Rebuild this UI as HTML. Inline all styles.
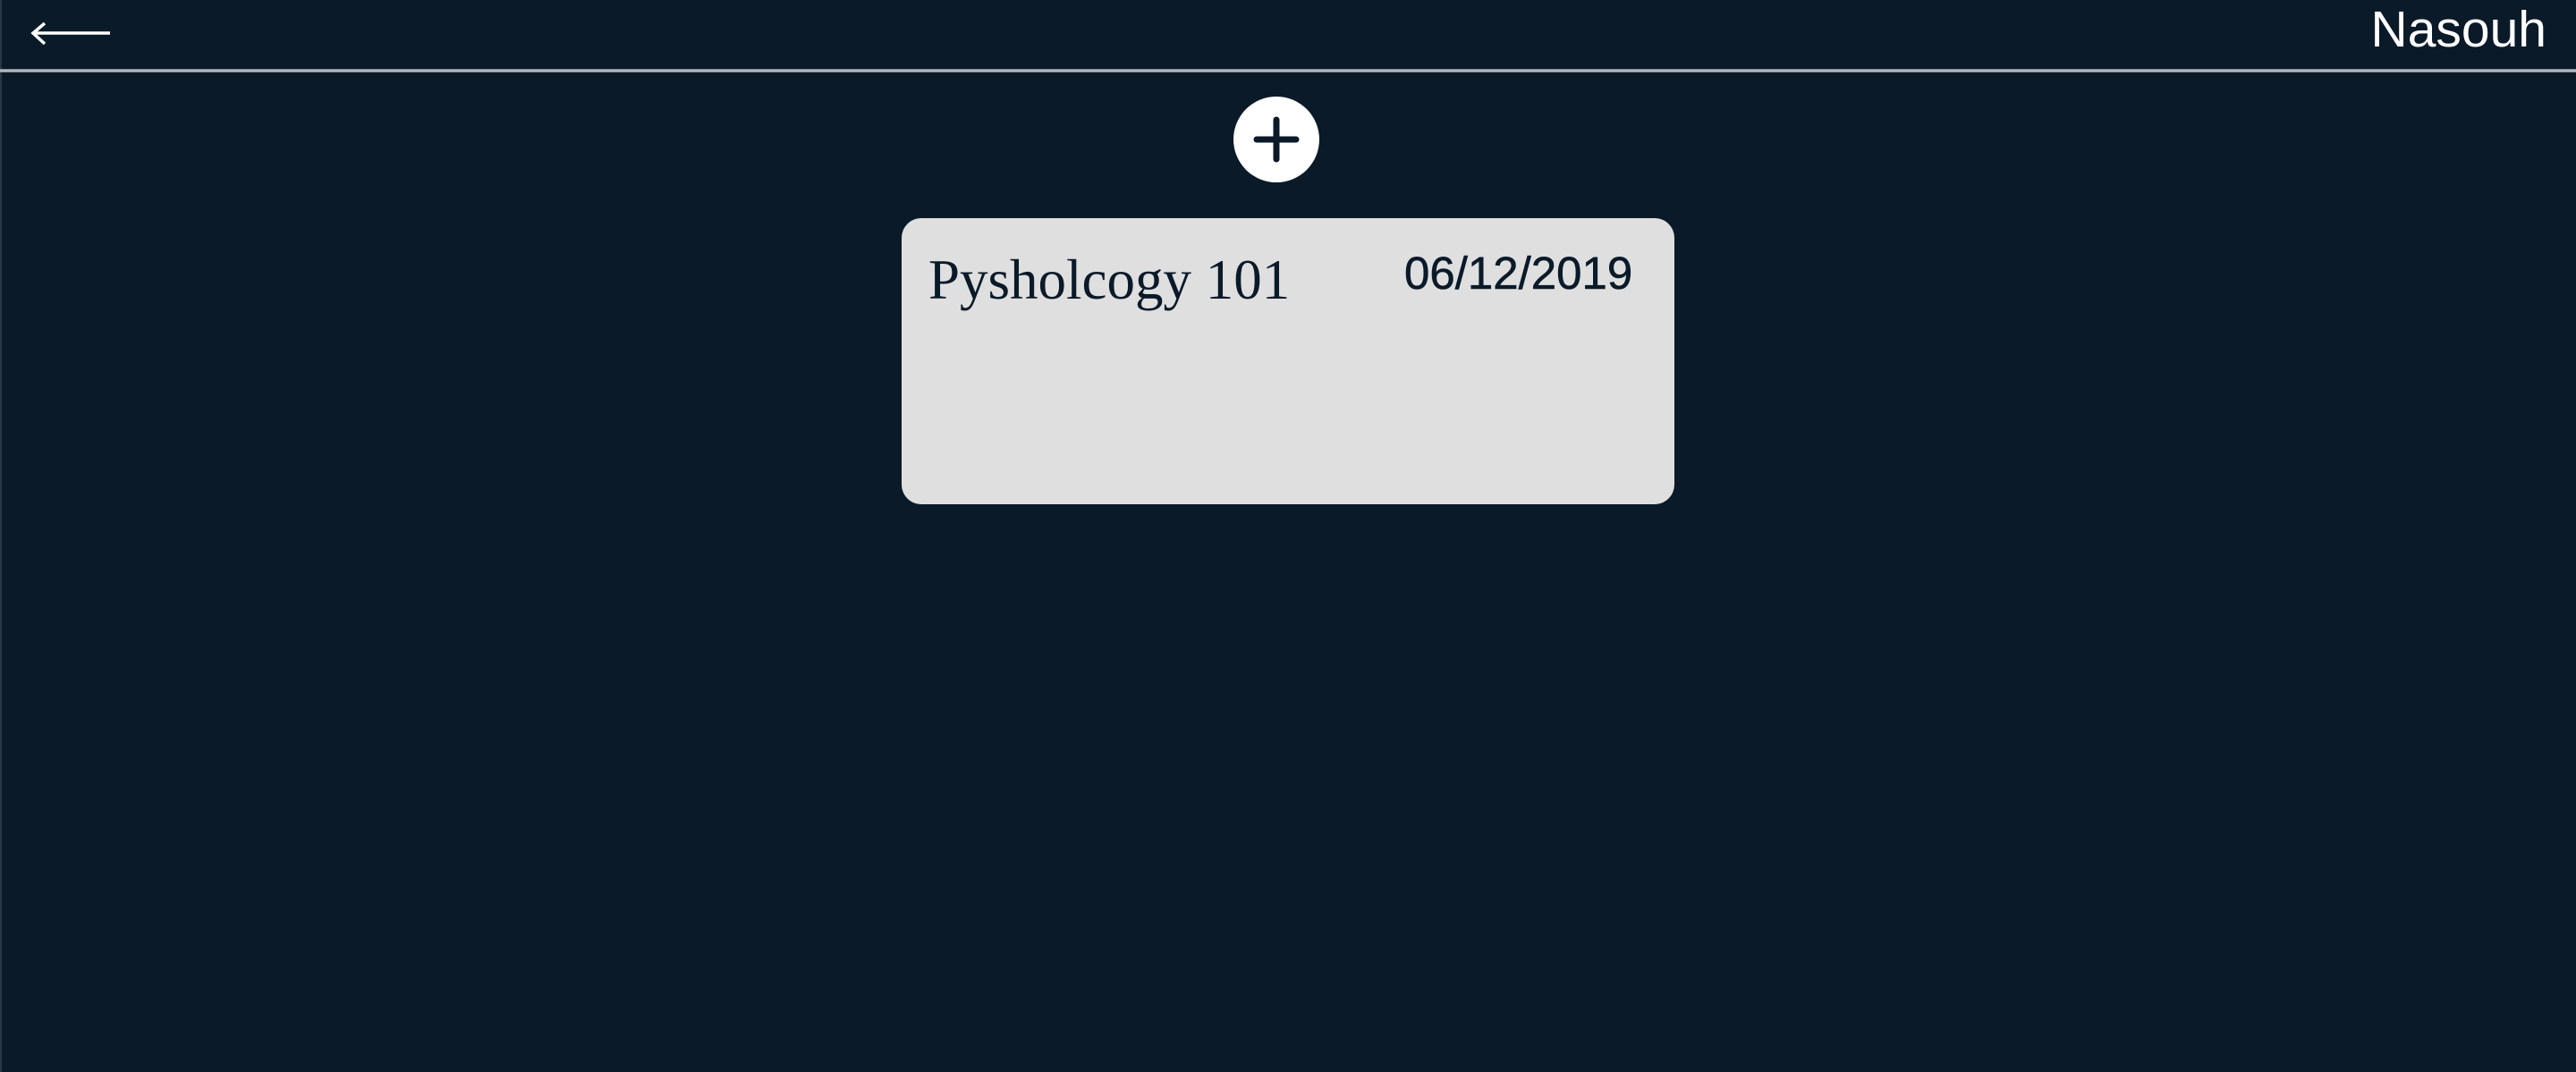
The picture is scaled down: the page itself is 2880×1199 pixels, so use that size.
<!DOCTYPE html>
<html><head><meta charset="utf-8"><style>
html,body{margin:0;padding:0}
body{width:2880px;height:1199px;background:#0b1a29;position:relative;overflow:hidden;font-family:"Liberation Sans",sans-serif}
.edge{position:absolute;left:0;top:0;width:2px;height:1199px;background:#2a3643}
.line{position:absolute;left:0;top:77px;width:2880px;height:4px;background:linear-gradient(#6d747c,#c8cacc,#7c8288)}
.name{position:absolute;right:33px;top:0px;font-size:57px;line-height:66px;color:#fff}
.plus{position:absolute;left:1379px;top:108px;width:96px;height:96px;border-radius:50%;background:#fff}
.card{position:absolute;left:1008px;top:244px;width:864px;height:320px;background:#dfdfdf;border-radius:22px}
.title{position:absolute;left:30px;top:33px;font-family:"Liberation Serif",serif;font-size:63px;color:#0b1a29}
.date{position:absolute;left:562px;top:32px;font-size:51px;color:#0b1a29;-webkit-text-stroke:0.6px #0b1a29}
</style></head><body>
<div class="edge"></div>
<svg style="position:absolute;left:0;top:0" width="140" height="70"><path d="M37 37H123M50 26L37 37L50 49" stroke="#fff" stroke-width="3.5" fill="none"/></svg>
<div class="name">Nasouh</div>
<div class="line"></div>
<div class="plus"><svg width="96" height="96"><path d="M48 26V70M26 48H70" stroke="#0b1a29" stroke-width="7" stroke-linecap="round"/></svg></div>
<div class="card"><div class="title">Pysholcogy 101</div><div class="date">06/12/2019</div></div>
</body></html>
